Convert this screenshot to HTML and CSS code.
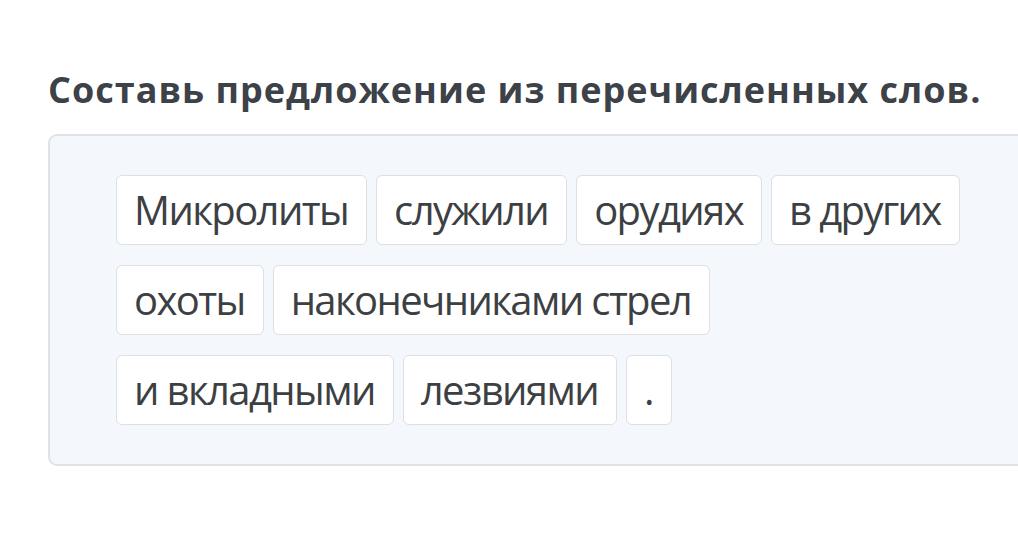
FILE: index.html
```html
<!DOCTYPE html>
<html lang="ru">
<head>
    <meta charset="UTF-8">
    <meta name="viewport" content="width=device-width, initial-scale=1.0">
    <title>Составь предложение</title>
    <link rel="stylesheet" href="styles.css">
</head>
<body>
    <div class="task">
        <h2>Составь предложение из перечисленных слов.</h2>

        <!-- Word bank -->
        <div class="word-box">
            <div class="words">
                <span class="word">Микролиты</span>
                <span class="word">служили</span>
                <span class="word">орудиях</span>
                <span class="word">в других</span>
                <span class="word">охоты</span>
                <span class="word">наконечниками стрел</span>
                <span class="word">и вкладными</span>
                <span class="word">лезвиями</span>
                <span class="word">.</span>
            </div>
        </div>
    </div>
</body>
</html>
```

FILE: styles.css
```css
/* General Styles */
body {
    font-family: 'Open Sans', 'Noto Sans', sans-serif;
    background: #fff;
    margin: 0;
    padding: 0;
    color: #3c4043;
    overflow: hidden;
}
.task {
    padding: 66px 0 0 48px;
}
h2 {
    margin: 0 0 20px;
    font-size: 36px;
    line-height: 48px;
    font-weight: 700;
    letter-spacing: 1px;
    color: #3d4148;
    white-space: nowrap;
}

/* Word bank */
.word-box {
    width: 1000px;
    padding: 39px 66px;
    background: #f4f8fc;
    border: 2px solid #dfe3e7;
    border-radius: 9px;
    box-sizing: border-box;
}
.words {
    display: flex;
    flex-wrap: wrap;
    gap: 20px 9px;
}
.word {
    display: inline-block;
    padding: 6px 18px 6px 17px;
    font-size: 40px;
    letter-spacing: -1.6px;
    line-height: 56px;
    background: #fff;
    border: 1px solid #dcdfe3;
    border-radius: 6px;
    color: #3c4043;
}
```
